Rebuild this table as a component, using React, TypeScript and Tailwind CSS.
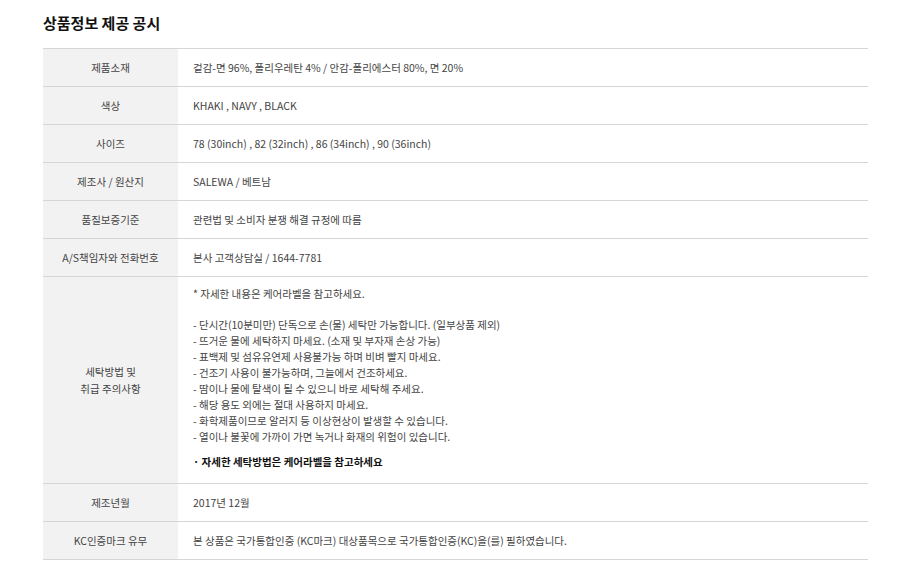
import React from 'react';

const rows: { label: string; value: string }[] = [
  { label: '제품소재', value: '겉감-면 96%, 폴리우레탄 4% / 안감-폴리에스터 80%, 면 20%' },
  { label: '색상', value: 'KHAKI , NAVY , BLACK' },
  { label: '사이즈', value: '78 (30inch) , 82 (32inch) , 86 (34inch) , 90 (36inch)' },
  { label: '제조사 / 원산지', value: 'SALEWA / 베트남' },
  { label: '품질보증기준', value: '관련법 및 소비자 분쟁 해결 규정에 따름' },
  { label: 'A/S책임자와 전화번호', value: '본사 고객상담실 / 1644-7781' },
];

const careLines = [
  '- 단시간(10분미만) 단독으로 손(물) 세탁만 가능합니다. (일부상품 제외)',
  '- 뜨거운 물에 세탁하지 마세요. (소재 및 부자재 손상 가능)',
  '- 표백제 및 섬유유연제 사용불가능 하며 비벼 빨지 마세요.',
  '- 건조기 사용이 불가능하며, 그늘에서 건조하세요.',
  '- 땀이나 물에 탈색이 될 수 있으니 바로 세탁해 주세요.',
  '- 해당 용도 외에는 절대 사용하지 마세요.',
  '- 화학제품이므로 알러지 등 이상현상이 발생할 수 있습니다.',
  '- 열이나 불꽃에 가까이 가면 녹거나 화재의 위험이 있습니다.',
];

const Row: React.FC<{ label: string; value: string }> = ({ label, value }) => (
  <div className="flex h-[38px] border-b border-[#d6d6d6]">
    <div className="w-[135px] bg-[#f2f2f2] flex items-center justify-center">{label}</div>
    <div className="flex-1 flex items-center pl-[15px]">{value}</div>
  </div>
);

const App: React.FC = () => {
  return (
    <div
      className="w-[920px] h-[570px] bg-white text-[10.5px] text-[#444]"
      style={{ fontFamily: '"Noto Sans CJK KR", "Noto Sans", sans-serif' }}
    >
      <div className="ml-[43px] w-[825px] pt-[11px]">
        {/* Title */}
        <h2 className="h-[24px] leading-[24px] text-[15px] font-bold text-[#111] mb-[13px]">상품정보 제공 공시</h2>

        {/* Table */}
        <div className="border-t border-[#d6d6d6]">
          {rows.map(r => (
            <Row key={r.label} label={r.label} value={r.value} />
          ))}

          <div className="flex h-[207px] border-b border-[#d6d6d6]">
            <div className="w-[135px] bg-[#f2f2f2] flex flex-col items-center justify-center leading-[17px]">
              <span>세탁방법 및</span>
              <span>취급 주의사항</span>
            </div>
            <div className="flex-1 pl-[15px] pt-[9px] leading-[16px]">
              <p>* 자세한 내용은 케어라벨을 참고하세요.</p>
              <div className="mt-[15px]">
                {careLines.map(line => (
                  <p key={line}>{line}</p>
                ))}
              </div>
              <p className="mt-[9px] font-bold text-[#111]">· 자세한 세탁방법은 케어라벨을 참고하세요</p>
            </div>
          </div>

          <Row label="제조년월" value="2017년 12월" />
          <Row label="KC인증마크 유무" value="본 상품은 국가통합인증 (KC마크) 대상품목으로 국가통합인증(KC)을(를) 필하였습니다." />
        </div>
      </div>
    </div>
  );
};

export default App;
